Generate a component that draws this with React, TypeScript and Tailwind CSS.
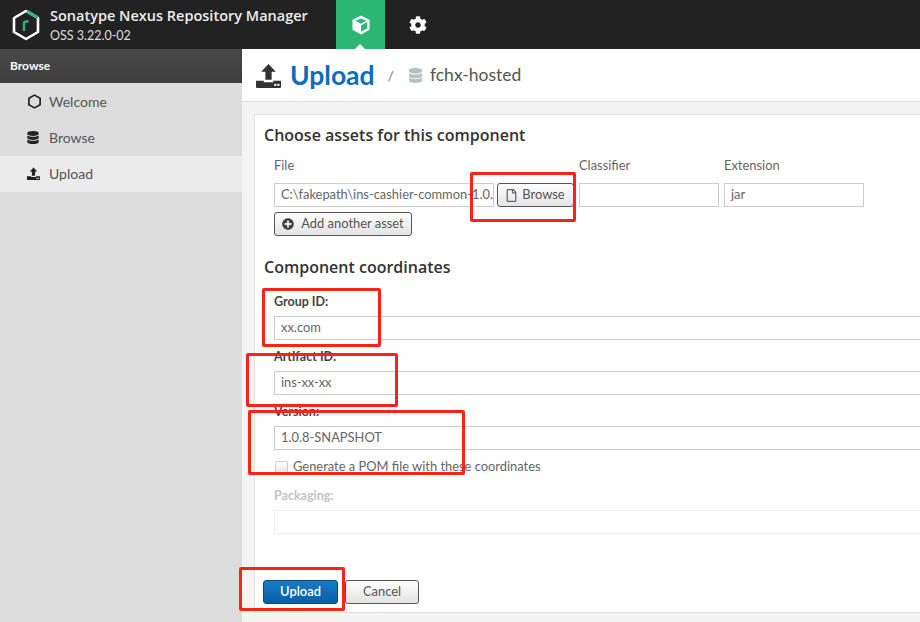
import React from "react";
import { FaDatabase, FaCog, FaPlusCircle, FaRegFile } from "react-icons/fa";

const font = "font-['Lato','Liberation_Sans',sans-serif]";
const headFont = "font-['Open_Sans','Liberation_Sans',sans-serif]";

const UploadIcon = ({ className }: { className?: string }) => (
  <svg viewBox="0 0 24 24" className={className} fill="currentColor">
    <path d="M12 1 L19 8.5 H15 V16 H9 V8.5 H5 Z" />
    <path d="M0 17 H7.5 V18.5 H16.5 V17 H24 V23 Q24 24 23 24 H1 Q0 24 0 23 Z" />
    <rect x="17.5" y="20" width="2" height="2" fill="#fff" />
    <rect x="20.5" y="20" width="2" height="2" fill="#fff" />
  </svg>
);

const CubeIcon = () => (
  <svg viewBox="0 0 24 24" className="w-[20px] h-[20px]" fill="none" stroke="#fff" strokeWidth="2.4" strokeLinejoin="round">
    <path d="M12 2 L21 6.5 V17 L12 22 L3 17 V6.5 Z" fill="#fff" />
    <path d="M12 12.5 L19.5 8.3 V16 L12 20 Z" fill="#2bb673" stroke="none" />
    <path d="M12 4.2 L18.5 7 L12 10.6 L5.5 7 Z" fill="#2bb673" stroke="none" />
  </svg>
);

const Logo = () => (
  <svg viewBox="0 0 28 32" className="w-[28px] h-[32px]" fill="none">
    <path d="M14 2 L2 9 V23 L14 30 L26 23 V9 Z" stroke="#fff" strokeWidth="2.6" strokeLinejoin="round" />
    <path d="M15 2 L26 8.5" stroke="#2bb673" strokeWidth="3" />
    <path d="M12 22 V14.5 Q12 12.5 14.5 12.5 H16.5" stroke="#2bb673" strokeWidth="2.4" />
  </svg>
);

const NavItem = ({ icon, label, active }: { icon: React.ReactNode; label: string; active?: boolean }) => (
  <div className={`h-[36px] flex items-center pb-[2px] text-[14px] text-[#555] ${active ? "bg-[#ebebeb]" : ""}`}>
    <div className="w-[49px] pl-[27px] flex items-center text-[#222]">{icon}</div>
    <span>{label}</span>
  </div>
);

const Field = ({ label, value, disabled }: { label: string; value: string; disabled?: boolean }) => (
  <div>
    <div className={`h-[20px] flex items-center text-[12.5px] font-bold ${disabled ? "text-[#c4c4c4]" : "text-[#444]"}`}>{label}</div>
    <div className={`mt-[4px] h-[24px] w-[700px] border bg-white px-[6px] flex items-center text-[12.9px] text-[#666] ${disabled ? "border-[#eee]" : "border-[#ccc]"}`}>
      {value}
    </div>
  </div>
);

const RedBox = ({ className }: { className: string }) => (
  <div className={`absolute border-[3px] border-[#fb2317] rounded-[2px] ${className}`} />
);

const btn = "h-[24px] rounded-[3px] border border-[#555] bg-gradient-to-b from-white to-[#e3e3e3] flex items-center justify-center text-[12.9px] text-[#555]";

export default function App() {
  return (
    <div className={`relative w-[920px] h-[622px] overflow-hidden bg-[#f4f4f4] ${font}`}>
      {/* top bar */}
      <header className="h-[49px] bg-[#222] flex items-center text-white">
        <div className="w-[50px] pl-[12px] flex items-center"><Logo /></div>
        <div className="w-[286px]">
          <div className={`text-[14.5px] font-semibold leading-[20px] text-[#eee] ${headFont}`}>Sonatype Nexus Repository Manager</div>
          <div className="text-[12.5px] leading-[15px] mt-[2px] text-[#ddd]">OSS 3.22.0-02</div>
        </div>
        <div className="relative w-[49px] h-[49px] bg-[#2bb673] flex items-center justify-center">
          <CubeIcon />
          <div className="absolute bottom-0 left-[19px] w-0 h-0 border-x-[5px] border-x-transparent border-b-[5px] border-b-white" />
        </div>
        <div className="w-[66px] flex justify-center"><FaCog className="w-[18px] h-[18px] text-white" /></div>
      </header>

      <div className="flex h-[573px]">
        {/* sidebar */}
        <aside className="w-[242px] shrink-0 bg-[#ddd]">
          <div className="h-[34px] bg-gradient-to-b from-[#484848] to-[#3e3e3e] flex items-center px-[10px] text-[12px] font-bold text-white">Browse</div>
          <div className="pt-[1px]">
            <NavItem
              label="Welcome"
              icon={
                <svg viewBox="0 0 16 16" className="w-[15px] h-[15px]" fill="none" stroke="#222" strokeWidth="1.8">
                  <path d="M8 1.2 L14 4.6 V11.4 L8 14.8 L2 11.4 V4.6 Z" strokeLinejoin="round" />
                </svg>
              }
            />
            <NavItem label="Browse" icon={<FaDatabase className="w-[12px] h-[13px]" />} />
            <NavItem label="Upload" active icon={<UploadIcon className="w-[13px] h-[13px]" />} />
          </div>
        </aside>

        {/* main */}
        <main className="flex-1 min-w-0">
          <div className="h-[53px] bg-white border-b border-[#ddd] flex items-center pl-[14px]">
            <UploadIcon className="w-[25px] h-[25px] text-[#333] mr-[9px]" />
            <span className="text-[26.5px] font-bold text-[#0a6ebd] leading-none">Upload</span>
            <span className="ml-[13px] mr-[15px] text-[14px] text-[#777]">/</span>
            <FaDatabase className="w-[13px] h-[15px] text-[#b5c0c4] mr-[8px]" />
            <span className="text-[17.5px] text-[#555]">fchx-hosted</span>
          </div>

          <div className="pl-[12px] pt-[12px]">
            <div className="h-[499px] w-[700px] bg-white border border-[#e0e0e0] pl-[9px] relative">
              <h2 className={`h-[17px] mt-[11px] flex items-center text-[16px] font-semibold text-[#333] ${headFont}`}>Choose assets for this component</h2>

              <div className="pl-[10px] mt-[15px]">
                <div className="flex text-[12.9px] text-[#666] h-[16px] items-center">
                  <span className="w-[305px]">File</span>
                  <span className="w-[145px]">Classifier</span>
                  <span>Extension</span>
                </div>
                <div className="flex mt-[9px] h-[24px]">
                  <div className="w-[220px] border border-[#ccc] pl-[6px] pr-[2px] flex items-center text-[12.9px] text-[#666] whitespace-nowrap">
                    C:\fakepath\ins-cashier-common-1.0.
                  </div>
                  <button className={`${btn} w-[77px] ml-[3px] gap-[5px]`}>
                    <FaRegFile className="w-[11px] h-[13px] text-[#666]" />
                    Browse
                  </button>
                  <div className="w-[140px] ml-[5px] border border-[#ccc]" />
                  <div className="w-[140px] ml-[5px] border border-[#ccc] px-[6px] flex items-center text-[12.9px] text-[#666]">jar</div>
                </div>
                <button className={`${btn} w-[138px] mt-[5px] gap-[7px]`}>
                  <FaPlusCircle className="w-[12px] h-[12px] text-[#444]" />
                  Add another asset
                </button>
              </div>

              <h2 className={`h-[17px] mt-[22px] flex items-center text-[16px] font-semibold text-[#333] ${headFont}`}>Component coordinates</h2>

              <div className="pl-[10px] mt-[17px] flex flex-col gap-[7px]">
                <Field label="Group ID:" value="xx.com" />
                <Field label="Artifact ID:" value="ins-xx-xx" />
                <Field label="Version:" value="1.0.8-SNAPSHOT" />
              </div>

              <div className="pl-[11px] mt-[10px] flex items-center h-[14px] text-[12.9px] text-[#666]">
                <div className="w-[13px] h-[13px] rounded-[2px] border border-[#ccc] bg-gradient-to-b from-white to-[#e5e5e5] mr-[5px]" />
                Generate a POM file with these coordinates
              </div>

              <div className="pl-[10px] mt-[12px]">
                <Field label="Packaging:" value="" disabled />
              </div>

              <div className="absolute left-[8px] top-[465px] flex gap-[7px]">
                <button className="w-[75px] h-[24px] rounded-[3px] border border-[#0b4a7f] bg-gradient-to-b from-[#197ac5] to-[#0a5fa5] text-[12.9px] font-semibold text-white">Upload</button>
                <button className={`${btn} w-[74px]`}>Cancel</button>
              </div>
            </div>
          </div>
        </main>
      </div>

      {/* red annotation boxes */}
      <RedBox className="left-[470px] top-[172px] w-[106px] h-[50px]" />
      <RedBox className="left-[262px] top-[288px] w-[119px] h-[59px]" />
      <RedBox className="left-[246px] top-[353px] w-[152px] h-[54px]" />
      <RedBox className="left-[248px] top-[410px] w-[217px] h-[65px]" />
      <RedBox className="left-[239px] top-[567px] w-[106px] h-[44px]" />
    </div>
  );
}
